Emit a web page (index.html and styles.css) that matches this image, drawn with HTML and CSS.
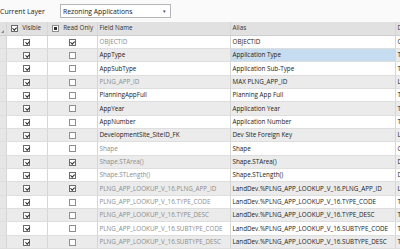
FILE: index.html
```html
<!DOCTYPE html>
<html lang="en">
<head>
    <meta charset="UTF-8">
    <meta name="viewport" content="width=device-width, initial-scale=1.0">
    <title>Fields</title>
    <link rel="stylesheet" href="styles.css">
</head>
<body>
    <header class="layer-bar">
        <span class="layer-label">Current Layer</span>
        <div class="layer-select">
            <span>Rezoning Applications</span>
            <span class="arrow">&#9662;</span>
        </div>
    </header>

    <table class="fields">
        <colgroup>
            <col class="c-head">
            <col class="c-vis">
            <col class="c-ro">
            <col class="c-name">
            <col class="c-alias">
            <col class="c-type">
        </colgroup>
        <thead>
            <tr>
                <th class="corner"><span class="tri"></span></th>
                <th><span class="cb on"></span> Visible</th>
                <th><span class="cb mixed"></span> Read Only</th>
                <th>Field Name</th>
                <th>Alias</th>
                <th>Data Type</th>
            </tr>
        </thead>
        <tbody>
            <tr>
                <td class="rh"></td>
                <td class="mid"><span class="cb on"></span></td>
                <td class="mid"><span class="cb on"></span></td>
                <td class="ro">OBJECTID</td>
                <td>OBJECTID</td>
                <td>Object ID</td>
            </tr>
            <tr>
                <td class="rh"></td>
                <td class="mid"><span class="cb on"></span></td>
                <td class="mid"><span class="cb"></span></td>
                <td>AppType</td>
                <td class="selected">Application Type</td>
                <td>Text</td>
            </tr>
            <tr>
                <td class="rh"></td>
                <td class="mid"><span class="cb on"></span></td>
                <td class="mid"><span class="cb"></span></td>
                <td>AppSubType</td>
                <td>Application Sub-Type</td>
                <td>Text</td>
            </tr>
            <tr>
                <td class="rh"></td>
                <td class="mid"><span class="cb on"></span></td>
                <td class="mid"><span class="cb"></span></td>
                <td class="ro">PLNG_APP_ID</td>
                <td>MAX PLNG_APP_ID</td>
                <td>Long</td>
            </tr>
            <tr>
                <td class="rh"></td>
                <td class="mid"><span class="cb on"></span></td>
                <td class="mid"><span class="cb"></span></td>
                <td>PlanningAppFull</td>
                <td>Planning App Full</td>
                <td>Text</td>
            </tr>
            <tr>
                <td class="rh"></td>
                <td class="mid"><span class="cb on"></span></td>
                <td class="mid"><span class="cb"></span></td>
                <td>AppYear</td>
                <td>Application Year</td>
                <td>Text</td>
            </tr>
            <tr>
                <td class="rh"></td>
                <td class="mid"><span class="cb on"></span></td>
                <td class="mid"><span class="cb"></span></td>
                <td>AppNumber</td>
                <td>Application Number</td>
                <td>Text</td>
            </tr>
            <tr>
                <td class="rh"></td>
                <td class="mid"><span class="cb on"></span></td>
                <td class="mid"><span class="cb"></span></td>
                <td>DevelopmentSite_SiteID_FK</td>
                <td>Dev Site Foreign Key</td>
                <td>Long</td>
            </tr>
            <tr>
                <td class="rh"></td>
                <td class="mid"><span class="cb on"></span></td>
                <td class="mid"><span class="cb"></span></td>
                <td class="ro">Shape</td>
                <td>Shape</td>
                <td>Geometry</td>
            </tr>
            <tr>
                <td class="rh"></td>
                <td class="mid"><span class="cb on"></span></td>
                <td class="mid"><span class="cb on"></span></td>
                <td class="ro">Shape.STArea()</td>
                <td>Shape.STArea()</td>
                <td>Double</td>
            </tr>
            <tr>
                <td class="rh"></td>
                <td class="mid"><span class="cb on"></span></td>
                <td class="mid"><span class="cb on"></span></td>
                <td class="ro">Shape.STLength()</td>
                <td>Shape.STLength()</td>
                <td>Double</td>
            </tr>
            <tr>
                <td class="rh"></td>
                <td class="mid"><span class="cb on"></span></td>
                <td class="mid"><span class="cb on"></span></td>
                <td class="ro">PLNG_APP_LOOKUP_V_16.PLNG_APP_ID</td>
                <td>LandDev.%PLNG_APP_LOOKUP_V_16.PLNG_APP_ID</td>
                <td>Long</td>
            </tr>
            <tr>
                <td class="rh"></td>
                <td class="mid"><span class="cb on"></span></td>
                <td class="mid"><span class="cb"></span></td>
                <td class="ro">PLNG_APP_LOOKUP_V_16.TYPE_CODE</td>
                <td>LandDev.%PLNG_APP_LOOKUP_V_16.TYPE_CODE</td>
                <td>Text</td>
            </tr>
            <tr>
                <td class="rh"></td>
                <td class="mid"><span class="cb on"></span></td>
                <td class="mid"><span class="cb"></span></td>
                <td class="ro">PLNG_APP_LOOKUP_V_16.TYPE_DESC</td>
                <td>LandDev.%PLNG_APP_LOOKUP_V_16.TYPE_DESC</td>
                <td>Text</td>
            </tr>
            <tr>
                <td class="rh"></td>
                <td class="mid"><span class="cb on"></span></td>
                <td class="mid"><span class="cb"></span></td>
                <td class="ro">PLNG_APP_LOOKUP_V_16.SUBTYPE_CODE</td>
                <td>LandDev.%PLNG_APP_LOOKUP_V_16.SUBTYPE_CODE</td>
                <td>Text</td>
            </tr>
            <tr>
                <td class="rh"></td>
                <td class="mid"><span class="cb on"></span></td>
                <td class="mid"><span class="cb"></span></td>
                <td class="ro">PLNG_APP_LOOKUP_V_16.SUBTYPE_DESC</td>
                <td>LandDev.%PLNG_APP_LOOKUP_V_16.SUBTYPE_DESC</td>
                <td>Text</td>
            </tr>
        </tbody>
    </table>
</body>
</html>
```

FILE: styles.css
```css
body {
    font-family: "Open Sans", "Noto Sans", sans-serif;
    font-size: 6.3px;
    color: #222;
    margin: 0;
    padding: 0;
    background-color: #fafafa;
    overflow: hidden;
}

.layer-bar {
    display: flex;
    align-items: center;
    height: 22px;
    background-color: #fafafa;
}

.layer-label {
    font-size: 7px;
    width: 60px;
    white-space: nowrap;
}

.layer-select {
    display: flex;
    align-items: center;
    justify-content: space-between;
    width: 111px;
    height: 14px;
    padding: 0 4px 0 2px;
    border: 1px solid #b5b5b5;
    background-color: #fff;
    font-size: 6.8px;
    box-sizing: border-box;
}

.arrow {
    font-size: 5px;
    color: #444;
}

.fields {
    table-layout: fixed;
    border-collapse: collapse;
    width: 420px;
}

.c-head { width: 6px; }
.c-vis { width: 41px; }
.c-ro { width: 50px; }
.c-name { width: 133px; }
.c-alias { width: 165px; }
.c-type { width: 25px; }

.fields th,
.fields td {
    height: 13.33px;
    padding: 0 2px;
    white-space: nowrap;
    overflow: hidden;
    border-right: 1px solid #d6d6d6;
    border-bottom: 1px solid #dedede;
    text-align: left;
    box-sizing: border-box;
    line-height: 12px;
}

.fields th {
    background-color: #e1e1e1;
    font-weight: normal;
    color: #333;
    border-bottom: 1px solid #cfcfcf;
}

.fields th .cb {
    margin: 0 3px 0 2px;
}

.fields tbody tr:nth-child(odd) td {
    background-color: #fff;
}

.fields tbody tr:nth-child(even) td {
    background-color: #ebebeb;
}

.fields tbody tr td.rh {
    background-color: #e6e6e6;
    padding: 0;
}

.fields th.corner {
    padding: 0;
    position: relative;
}

.tri {
    position: absolute;
    left: 1px;
    bottom: 2px;
    width: 0;
    height: 0;
    border-left: 3px solid transparent;
    border-bottom: 3px solid #8a8a8a;
}

.fields td.mid {
    text-align: center;
}

.fields td.ro {
    color: #8c8c8c;
}

.fields tbody tr td.selected {
    background-color: #c6dcf0;
}

.cb {
    display: inline-block;
    position: relative;
    width: 7px;
    height: 7px;
    border: 1px solid #8e8e8e;
    background-color: #fff;
    box-sizing: border-box;
    vertical-align: middle;
}

.cb.on {
    border-color: #6a6a6a;
}

.cb.on::after {
    content: '';
    position: absolute;
    left: 1.6px;
    top: 0;
    width: 1.5px;
    height: 3.4px;
    border: solid #222;
    border-width: 0 1px 1px 0;
    transform: rotate(45deg);
}

.cb.mixed::after {
    content: '';
    position: absolute;
    left: 1px;
    top: 1px;
    width: 3px;
    height: 3px;
    background-color: #333;
}
```
